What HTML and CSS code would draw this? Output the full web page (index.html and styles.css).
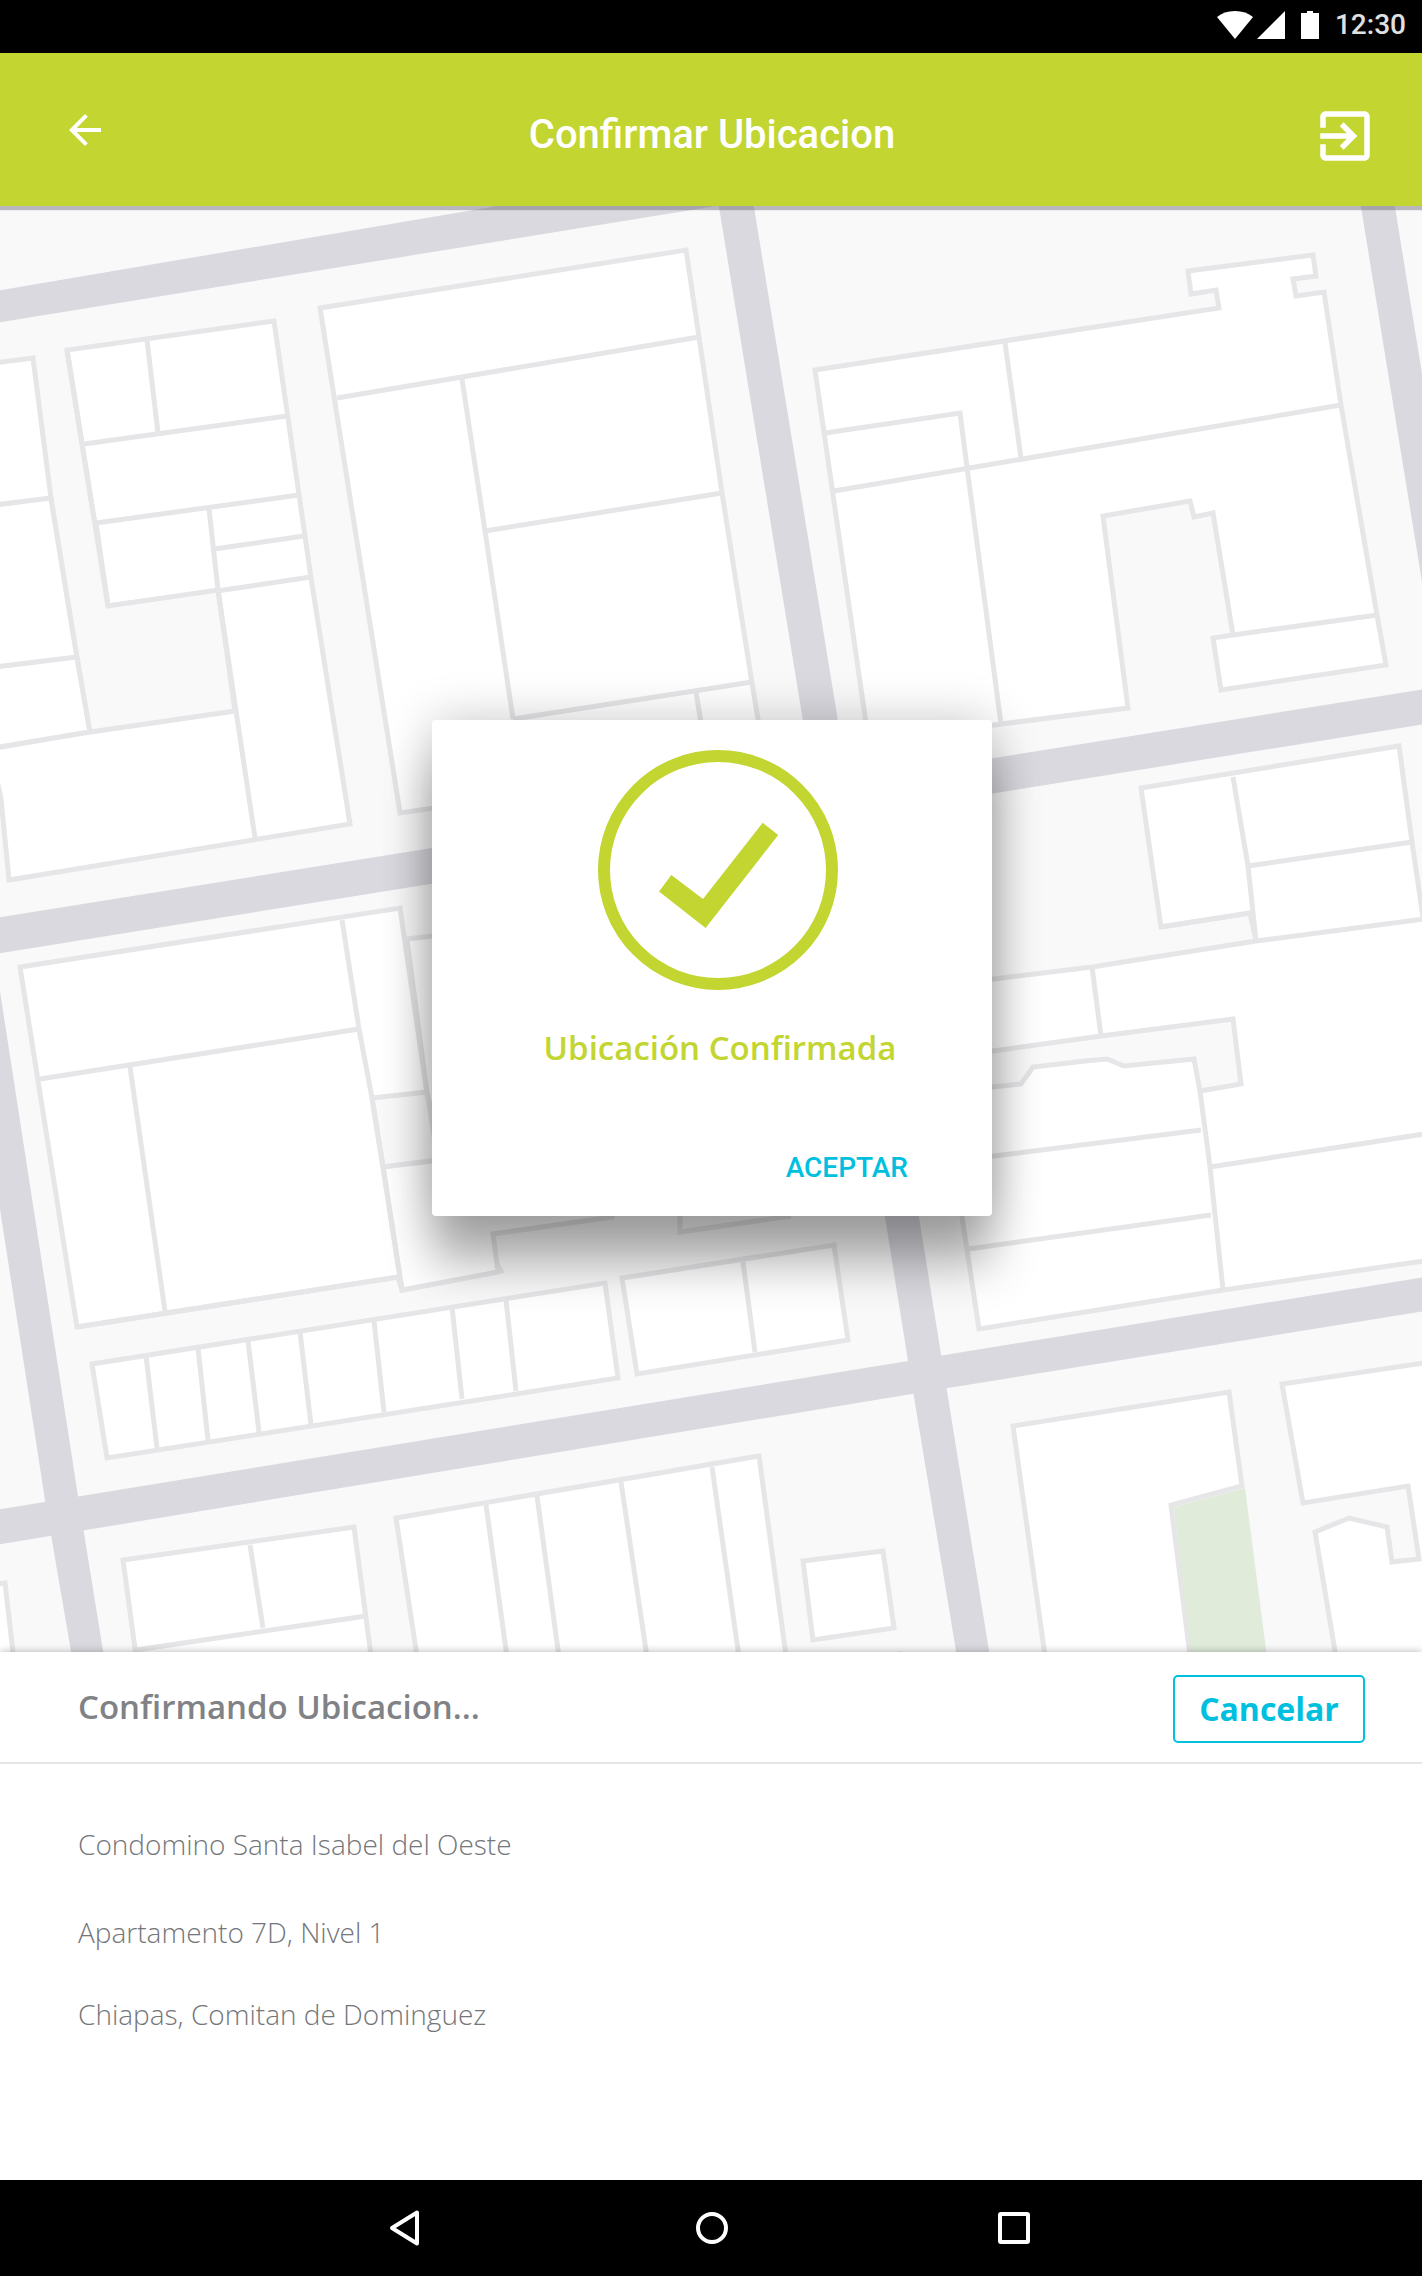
FILE: index.html
```html
<!DOCTYPE html>
<html lang="es">
<head>
<meta charset="utf-8">
<meta name="viewport" content="width=device-width, initial-scale=1">
<title>Confirmar Ubicacion</title>
<link rel="stylesheet" href="styles.css">
</head>
<body>
<div class="screen">
  <div class="status-bar">
    <div class="status-signals">
      <svg class="status-wifi" viewBox="0 0 36 28" aria-hidden="true"><path d="M0 6Q7 0 18 0T36 6L18 28Z"/></svg>
      <svg class="status-cell" viewBox="0 0 28 28" aria-hidden="true"><path d="M28 0V28H0Z"/></svg>
    </div>
    <svg class="status-battery" viewBox="0 0 18 28" aria-hidden="true"><path d="M0 2H6V0H12V2H18V28H0Z"/></svg>
    <span class="status-time">12:30</span>
  </div>

  <header class="app-bar">
    <button class="icon-button" type="button" aria-label="Volver">
      <svg class="icon-back" viewBox="0 0 24 24" aria-hidden="true"><path d="M20 11H7.83l5.59-5.59L12 4l-8 8 8 8 1.41-1.41L7.83 13H20z"/></svg>
    </button>
    <h1 class="app-title">Confirmar Ubicacion</h1>
    <button class="icon-button" type="button" aria-label="Salir">
      <svg class="icon-exit" viewBox="0 0 24 24" aria-hidden="true"><path d="M10.09 15.59L11.5 17l5-5-5-5-1.41 1.41L12.67 11H3v2h9.67l-2.58 2.59zM19 3H5c-1.11 0-2 .9-2 2v4h2V5h14v14H5v-4H3v4c0 1.1.89 2 2 2h14c1.1 0 2-.9 2-2V5c0-1.1-.9-2-2-2z"/></svg>
    </button>
  </header>

  <main class="map-area">
    <svg class="map" viewBox="-1 205 1422 1446" preserveAspectRatio="xMidYMin slice" aria-hidden="true">
      <g class="map-road">
        <path d="M-6 290L490 206L520 200H750L709 206L-6 322Z"/>
        <path d="M-6 917L1430 687V722L-6 953Z"/>
        <path d="M-6 1509L907 1360L1430 1275V1309L947 1387L-6 1544Z"/>
        <path d="M717 200H752L837 720L918 1216L940 1353L989 1656H956L907 1360L884 1216L802 720Z"/>
        <path d="M1359 200H1393L1422 379L1430 420V636Z"/>
        <path d="M-6 958L77 1495L103 1656H71L44 1499L-6 1176Z"/>
      </g>
      <g class="map-lot">
        <!-- north-west blocks -->
        <path d="M-6 362L32 357L50 497L76 656L89 731L-6 747Z"/>
        <path d="M-6 747L89 731L234 710L217 590L107 605L66 349L273 320L310 577L349 823L8 879L0 798L-6 770Z"/>
        <path class="map-yard" d="M50 497L76 656L89 731L234 710L217 589L107 605L95 522"/>
        <path d="M319 307L685 249L698 336L721 492L751 682L764 760L399 812Z"/>
        <!-- north-east blocks -->
        <path d="M814 369L1218 307L1215 289L1190 293L1187 270L1312 254L1315 275L1292 278L1295 295L1323 291L1340 404L1376 614L1385 664L1220 689L1212 637L1232 634L1212 512L1193 516L1189 500L1102 515L1127 707L1000 723L868 743Z"/>
        <path d="M1140 787L1398 745L1411 841L1424 930L1255 940L1249 912L1160 926Z"/>
        <path class="map-yard-fill" d="M1163 929L1246 916L1252 938L1150 955Z"/>
        <path d="M920 987L992 978L1091 966L1255 940L1430 917V1259L1222 1289L978 1328L961 1216Z"/>
        <path class="map-yard" d="M930 1058L992 1050L1100 1035L1232 1018L1240 1083L1199 1090L1193 1058L1123 1065L1106 1058L1084 1060L1032 1066L1020 1083L992 1086L930 1092"/>
        <!-- central-west blocks -->
        <path d="M19 966L399 907L426 1092L437 1160L500 1270L401 1289L397 1276L76 1326Z"/>
        <path class="map-yard" d="M371 1097L426 1091L437 1159L382 1166Z"/>
        <path d="M406 938L440 934V1150L426 1092Z"/>
        <path d="M382 1166L440 1159L620 1180L611 1216L492 1233L497 1271L401 1289Z"/>
        <path class="map-yard" d="M679 1206V1231L790 1215"/>
        <path d="M91 1363L604 1282L617 1377L106 1457Z"/>
        <path d="M621 1277L833 1244L847 1339L636 1373Z"/>
        <!-- southern blocks -->
        <path d="M-8 1584L4 1582L13 1660H-8Z"/>
        <path d="M122 1559L353 1526L371 1662H136Z"/>
        <path d="M395 1517L758 1455L786 1662H417Z"/>
        <path d="M802 1560L882 1550L893 1627L812 1639Z"/>
        <path d="M868 1658L898 1653V1662Z"/>
        <path d="M1012 1425L1228 1391L1241 1485L1170 1504L1190 1662H1045Z"/>
        <path d="M1430 1361L1281 1383L1302 1502L1407 1485L1418 1558L1391 1561L1386 1526L1348 1517L1314 1531L1336 1662H1430Z"/>
      </g>
      <path class="map-park" d="M1173 1506L1244 1487L1266 1656H1190Z"/>
      <path class="map-line" d="
        M-6 504L50 497M-6 666L76 656
        M146 339L157 432M83 443L286 415M95 522L298 494M208 508L217 589M213 548L303 535M216 590L310 576M217 589L254 837
        M336 397L698 336M461 378L484 530L512 718M484 530L721 492M512 718L751 681M695 691L700 722M107 605L66 349
        M1004 342L1020 457M824 432L959 412L966 466L1000 723M833 490L1340 404M1232 634L1376 614
        M1232 776L1247 865L1255 940M1247 865L1411 841M1160 926L1249 912
        M1091 966L1100 1035M1199 1090L1209 1166L1222 1289M1209 1166L1430 1132M985 1156L1200 1129M967 1248L1210 1214
        M341 919L358 1028L371 1097L382 1166L401 1289M39 1078L358 1028M129 1066L164 1310M397 1276L76 1326
        M145 1355L156 1447M197 1347L207 1439M247 1340L258 1431M299 1331L310 1424M373 1320L383 1411M451 1306L461 1398M505 1299L515 1390
        M742 1261L754 1351
        M249 1544L262 1627M135 1649L365 1615M485 1504L506 1656M536 1495L558 1656M620 1481L646 1656M711 1466L738 1656"/>
    </svg>

    <section class="dialog" role="dialog" aria-labelledby="dialog-title">
      <svg class="dialog-check" viewBox="0 0 240 240" aria-hidden="true">
        <circle cx="120" cy="120" r="114"/>
        <path d="M61 141.400L73.300 125L105 149L164.700 72.800L180.200 85L107.600 178Z"/>
      </svg>
      <h2 class="dialog-title" id="dialog-title">Ubicación Confirmada</h2>
      <button class="dialog-action" type="button">ACEPTAR</button>
    </section>
  </main>

  <section class="sheet">
    <div class="sheet-header">
      <h2 class="sheet-title">Confirmando Ubicacion...</h2>
      <button class="cancel-button" type="button">Cancelar</button>
    </div>
    <address class="address">
      <p class="address-place">Condomino Santa Isabel del Oeste</p>
      <p>Apartamento 7D, Nivel 1</p>
      <p>Chiapas, Comitan de Dominguez</p>
    </address>
  </section>

  <nav class="nav-bar" aria-label="Sistema">
    <button class="nav-button" type="button" aria-label="Atrás"><svg viewBox="0 0 48 48" aria-hidden="true"><path d="M31 8.500V39.500L6 24Z"/></svg></button>
    <button class="nav-button" type="button" aria-label="Inicio"><svg viewBox="0 0 48 48" aria-hidden="true"><circle cx="24" cy="24" r="14"/></svg></button>
    <button class="nav-button" type="button" aria-label="Recientes"><svg viewBox="0 0 48 48" aria-hidden="true"><rect x="10" y="10" width="28" height="28" rx="1"/></svg></button>
  </nav>
</div>
</body>
</html>
```
FILE: styles.css
```css
:root {
  --lime: #c2d531;
  --cyan: #00bfdf;
  --gray: #808285;
}

* {
  box-sizing: border-box;
}

body,
h1,
h2,
p {
  margin: 0;
}

body {
  background: #fff;
  font-family: "Open Sans", sans-serif;
}

button {
  padding: 0;
  border: 0;
  background: none;
  cursor: pointer;
}

svg {
  display: block;
}

.screen {
  display: flex;
  flex-direction: column;
  min-height: 100vh;
}

/* Status bar */

.status-bar {
  display: flex;
  align-items: center;
  justify-content: flex-end;
  gap: 16px;
  height: 53px;
  padding: 0 16px 4px;
  background: #000;
  fill: #fff;
}

.status-signals {
  display: flex;
  gap: 4px;
}

.status-wifi {
  width: 36px;
  height: 28px;
}

.status-cell {
  width: 28px;
  height: 28px;
}

.status-battery {
  width: 18px;
  height: 28px;
}

.status-time {
  color: #e0e0e0;
  font: 500 28px/32px Roboto, sans-serif;
}

/* App bar */

.app-bar {
  position: relative;
  z-index: 1;
  display: flex;
  align-items: center;
  justify-content: space-between;
  height: 153px;
  padding: 12px 44px 0 52px;
  background: var(--lime);
  box-shadow: 0 4px 1px rgba(90, 85, 100, 0.4);
  color: #fff;
  fill: #fff;
}

.app-title {
  padding-right: 6px;
  margin-bottom: 2px;
  font: 500 40px/48px Roboto, sans-serif;
}

.icon-button {
  display: flex;
  align-items: center;
  justify-content: center;
  width: 66px;
  height: 66px;
}

.icon-back {
  width: 48px;
  height: 48px;
  margin-bottom: 12px;
}

.icon-exit {
  width: 66px;
  height: 66px;
}

/* Map */

.map-area {
  position: relative;
  flex: 1;
  display: flex;
  flex-direction: column;
  align-items: center;
  padding: 514px 24px 120px 26px;
  background: #f9f9f9;
  overflow: hidden;
}

.map {
  position: absolute;
  inset: 0;
  width: 100%;
  height: 100%;
}

.map-road {
  fill: #dad9df;
}

.map-lot {
  fill: #fff;
  stroke: #e6e6e8;
  stroke-width: 5px;
}

.map-yard {
  fill: #f9f9f9;
}

.map-yard-fill {
  fill: #f9f9f9;
  stroke: none;
}

.map-park {
  fill: #e0ebda;
}

.map-line {
  fill: none;
  stroke: #e6e6e8;
  stroke-width: 5px;
}

/* Dialog */

.dialog {
  position: relative;
  display: flex;
  flex-direction: column;
  align-items: center;
  width: 560px;
  max-width: 100%;
  padding: 30px 68px 24px 84px;
  border-radius: 4px;
  background: #fff;
  box-shadow: 0 0 48px rgba(0, 0, 0, 0.22), 0 48px 48px rgba(0, 0, 0, 0.3);
}

.dialog-check {
  width: 240px;
  height: 240px;
  margin-right: 4px;
  fill: var(--lime);
}

.dialog-check circle {
  fill: none;
  stroke: var(--lime);
  stroke-width: 12px;
}

.dialog-title {
  margin-top: 34px;
  color: var(--lime);
  font-size: 33px;
  font-weight: 600;
  line-height: 48px;
  white-space: nowrap;
}

.dialog-action {
  align-self: flex-end;
  height: 48px;
  margin-top: 72px;
  padding: 0 16px;
  color: var(--cyan);
  font: 500 28px/48px Roboto, sans-serif;
}

/* Bottom sheet */

.sheet {
  position: relative;
  height: 528px;
  background: #fff;
  box-shadow: 0 0 8px rgba(0, 0, 0, 0.3);
}

.sheet-header {
  display: flex;
  align-items: center;
  justify-content: space-between;
  height: 112px;
  padding: 0 57px 0 78px;
  border-bottom: 2px solid #e6e6e6;
}

.sheet-title {
  color: var(--gray);
  font-size: 33px;
  font-weight: 600;
  line-height: 48px;
}

.cancel-button {
  width: 192px;
  height: 68px;
  margin-top: 4px;
  border: 2px solid var(--cyan);
  border-radius: 5px;
  color: var(--cyan);
  font: 700 32px/48px "Open Sans", sans-serif;
}

.address {
  display: flex;
  flex-direction: column;
  gap: 42px;
  padding: 60px 78px;
  color: #74767a;
  font-size: 28px;
  font-style: normal;
  font-weight: 300;
  line-height: 40px;
}

.address-place {
  padding-bottom: 6px;
}

/* System navigation */

.nav-bar {
  position: relative;
  display: flex;
  align-items: center;
  justify-content: center;
  gap: 206px;
  height: 96px;
  padding-left: 2px;
  background: #000;
}

.nav-button {
  display: flex;
  justify-content: center;
  width: 96px;
}

.nav-button svg {
  width: 48px;
  height: 48px;
  fill: none;
  stroke: #fff;
  stroke-width: 4px;
  stroke-linejoin: round;
}
```
